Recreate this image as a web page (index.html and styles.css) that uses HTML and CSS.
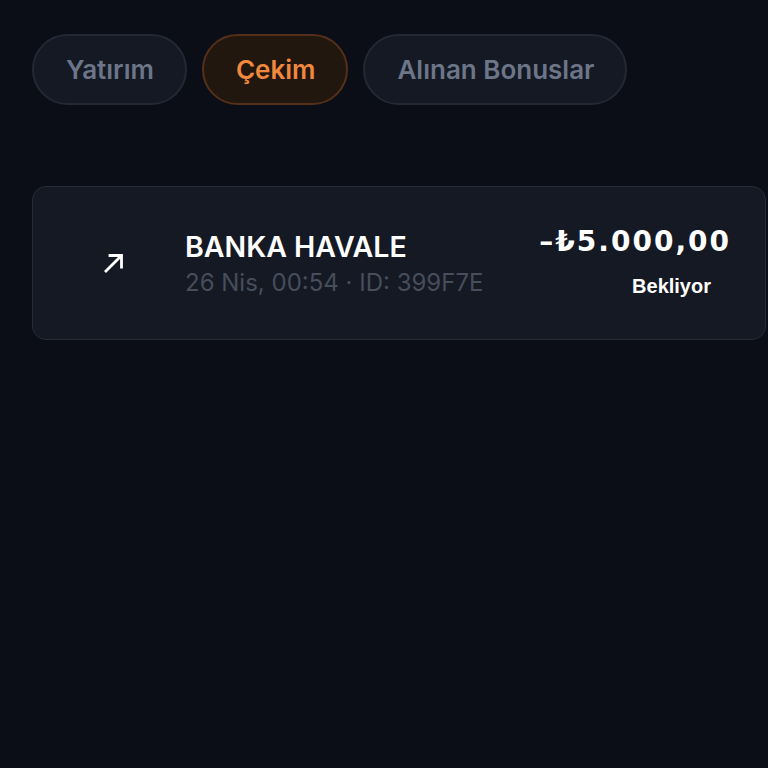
FILE: index.html
```html
<!DOCTYPE html>
<html lang="tr">
<head>
<meta charset="utf-8">
<link rel="stylesheet" href="styles.css">
</head>
<body>
<div class="page">
  <nav class="tabs">
    <button class="tab">Yatırım</button>
    <button class="tab active">Çekim</button>
    <button class="tab">Alınan Bonuslar</button>
  </nav>
  <div class="list">
    <div class="tx">
      <div class="tx-icon">
        <svg width="22" height="22" viewBox="0 0 22 22" fill="none" stroke="#ffffff" stroke-width="2.8" stroke-linecap="square">
          <path d="M3 19 L18 4"/>
          <path d="M7 3.5 H18.5 V15"/>
        </svg>
      </div>
      <div class="tx-main">
        <div class="tx-title">BANKA HAVALE</div>
        <div class="tx-sub">26 Nis, 00:54 · ID: 399F7E</div>
      </div>
      <div class="tx-side">
        <div class="tx-amount">–₺5.000,00</div>
        <div class="tx-status">Bekliyor</div>
      </div>
    </div>
  </div>
</div>
</body>
</html>
```
FILE: styles.css
```css
* { box-sizing: border-box; }
html, body {
  margin: 0;
  background: #0b0e17;
  height: 100%;
}
body {
  font-family: Inter, "Noto Sans", sans-serif;
  overflow: hidden;
}
.page {
  padding: 34px 0 0 32px;
  width: 768px;
}
.tabs {
  display: flex;
  gap: 15px;
}
.tab {
  font-family: Inter, sans-serif;
  font-size: 26px;
  font-weight: 600;
  color: #6c7688;
  background: #141924;
  border: 2px solid #232834;
  border-radius: 999px;
  height: 71px;
  padding: 0 31px 0 32px;
  cursor: pointer;
}
.tab.active {
  color: #f0883e;
  background: #22170f;
  border-color: #54301a;
}
.list {
  margin-top: 81px;
}
.tx {
  width: 734px;
  height: 154px;
  background: #151923;
  border: 1.5px solid #262b36;
  border-radius: 14px;
  display: flex;
  align-items: center;
  padding: 0 36px 0 46px;
}
.tx-icon {
  width: 70px;
  height: 70px;
  display: flex;
  align-items: center;
  justify-content: center;
  margin-right: 36px;
}
.tx-main {
  flex: 1;
  display: flex;
  flex-direction: column;
  gap: 4px;
}
.tx-title {
  font-size: 28.5px;
  font-weight: 600;
  color: #ffffff;
  line-height: 36px;
}
.tx-sub {
  font-size: 24px;
  color: #464d5b;
  line-height: 28px;
}
.tx-side {
  display: flex;
  flex-direction: column;
  align-items: flex-end;
  margin-top: -4px;
}
.tx-amount {
  font-family: "DejaVu Sans", sans-serif;
  font-weight: 700;
  font-size: 28px;
  letter-spacing: 2px;
  margin-right: -2px;
  color: #ffffff;
  line-height: 36px;
}
.tx-status {
  font-family: "Liberation Sans", Arial, sans-serif;
  font-weight: 700;
  font-size: 20px;
  color: #ffffff;
  padding: 14px 18px 0 0;
  line-height: 24px;
}
```
